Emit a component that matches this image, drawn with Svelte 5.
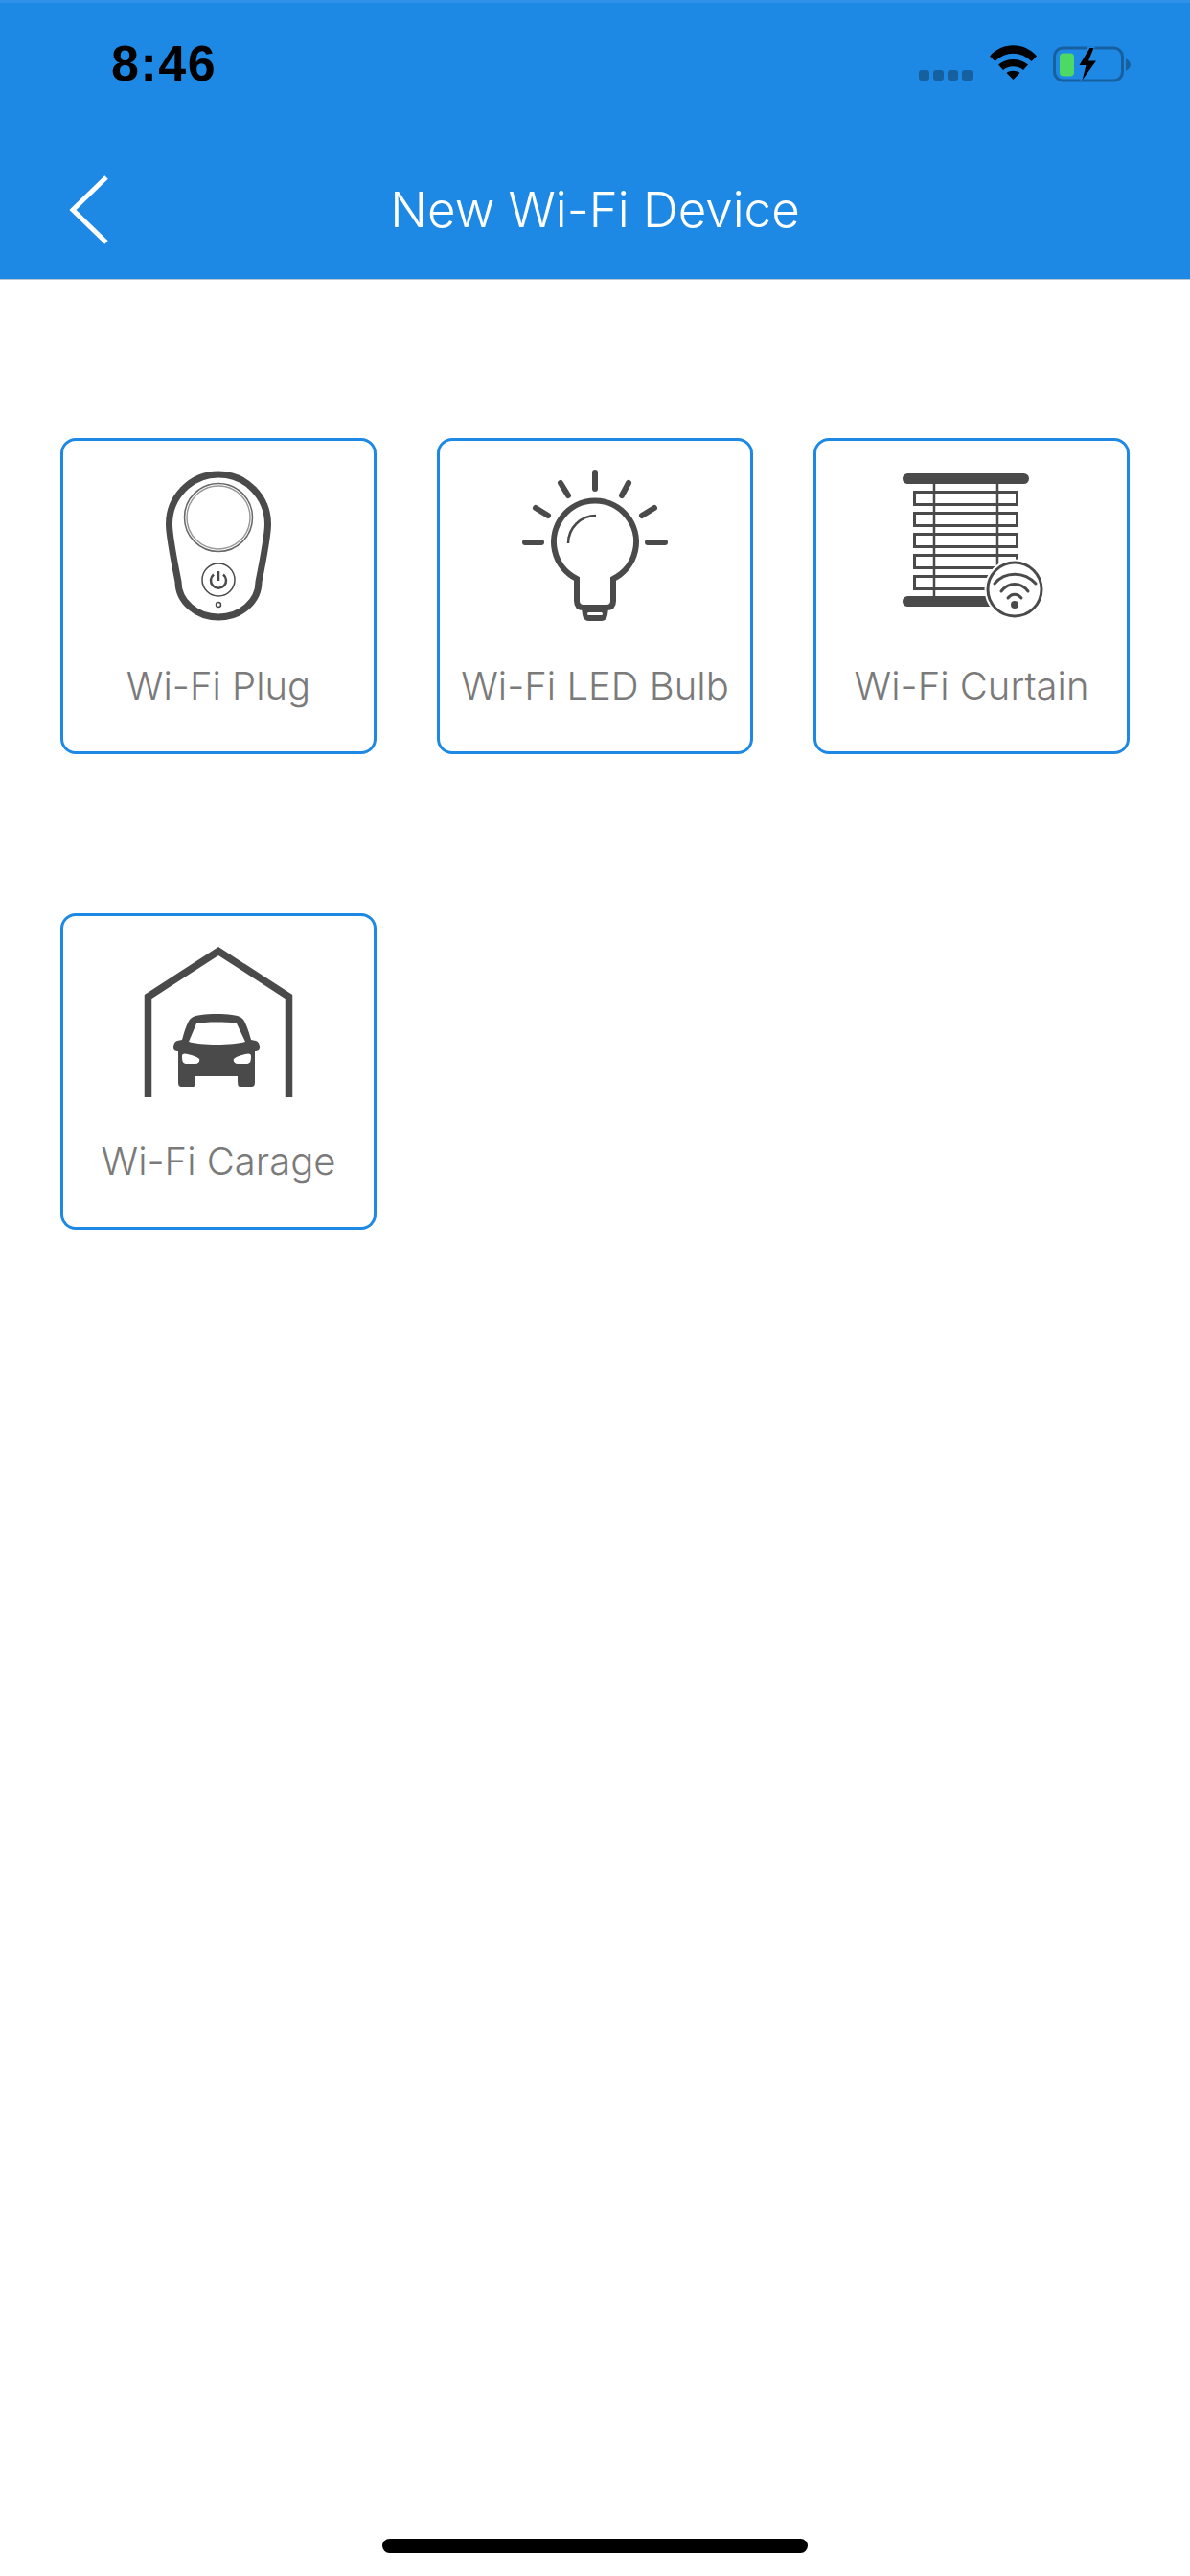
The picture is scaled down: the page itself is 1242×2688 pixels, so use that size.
<script>
  // device tiles shown on the picker; icon is drawn per kind below
  const devices = [
    { kind: "plug", label: "Wi-Fi Plug" },
    { kind: "bulb", label: "Wi-Fi LED Bulb" },
    { kind: "curtain", label: "Wi-Fi Curtain" },
    { kind: "garage", label: "Wi-Fi Carage" }
  ];
  const rays = [
    [165, 36, 165, 53],
    [129, 47, 137, 60],
    [200, 47, 193, 60],
    [103, 73, 116, 81],
    [227, 73, 214, 81],
    [92, 109, 109, 109],
    [220, 109, 238, 109]
  ];
  const slats = [55, 77, 99, 121, 143];
</script>

<div class="page">
  <header>
    <div class="status">
      <span class="time">8:46</span>
      <div class="signal">
        <i></i><i></i><i></i><i></i>
      </div>
      <svg class="wifi" width="50" height="37" viewBox="0 0 50 37">
        <path d="M0 11.500C13-3.500 36-3.500 49 11.500L43.500 17C32 6 17 6 5.500 17Z" />
        <path d="M9 20.500C17 13 32 13 40 20.500L35 26C29 21 20 21 14 26Z" />
        <path d="M17.500 29C21 26 28 26 31.500 29L24.500 36Z" />
      </svg>
      <svg class="battery" width="82" height="40" viewBox="0 0 82 40">
        <rect x="1.500" y="2" width="71" height="34" rx="9" fill="none" stroke="#17609f" stroke-width="3" />
        <path d="M76 13C79 15 81 17 81 19.500C81 22 79 24 76 26Z" fill="#17609f" />
        <rect x="7" y="7.500" width="15" height="24" rx="4" fill="#4cd964" />
        <path d="M36.500 0.500L26 21H33L28 37.500L47 14H38L44 0.500Z" fill="#1e88e5" />
        <path d="M38.500 2L27.500 20H34.500L30.500 35.500L45 15.500H37L42.500 2Z" fill="#000" />
      </svg>
    </div>
    <div class="nav">
      <button class="back" aria-label="Back">
        <svg width="42" height="74" viewBox="0 0 42 74">
          <path d="M39 3L4 37L39 71" fill="none" stroke="#fff" stroke-width="5" />
        </svg>
      </button>
      <h1>New Wi-Fi Device</h1>
    </div>
  </header>

  <main>
    {#each devices as d}
      <div class="tile">
        <svg class="icon" width="324" height="204" viewBox="3 3 324 204">
          {#if d.kind === "plug"}
            <path d="M113.500 90A51.500 52 0 0 1 216.500 90C216.500 100 209 140 207 150A42 37 0 0 1 123 150C121 140 113.500 100 113.500 90Z" fill="none" stroke="#4a4a4a" stroke-width="7" />
            <circle cx="165" cy="83" r="35.500" fill="none" stroke="#666" stroke-width="1.500" />
            <circle cx="165" cy="83" r="33" fill="none" stroke="#999" stroke-width="1.500" />
            <circle cx="165" cy="148" r="17" fill="none" stroke="#4a4a4a" stroke-width="1.500" />
            <path d="M160 142.500A8 8 0 1 0 170 142.500" fill="none" stroke="#4a4a4a" stroke-width="2.500" />
            <path d="M165 139V149" fill="none" stroke="#4a4a4a" stroke-width="2.500" />
            <circle cx="165" cy="174" r="2.500" fill="none" stroke="#4a4a4a" stroke-width="1.500" />
          {:else if d.kind === "bulb"}
            {#each rays as r}
              <line x1={r[0]} y1={r[1]} x2={r[2]} y2={r[3]} stroke="#4a4a4a" stroke-width="6" stroke-linecap="round" />
            {/each}
            <path d="M146 147A43 43 0 1 1 184 147V170Q184 177 177 177H153Q146 177 146 170Z" fill="none" stroke="#4a4a4a" stroke-width="6" />
            <path d="M137 110A29 29 0 0 1 166 81" fill="none" stroke="#4a4a4a" stroke-width="2.500" />
            <path d="M151 178H179L178 185Q177 191 171 191H159Q153 191 152 185Z" fill="#4a4a4a" />
            <rect x="157" y="182" width="16" height="3" rx="1.500" fill="#fff" />
          {:else if d.kind === "curtain"}
            <rect x="93" y="37" width="132" height="11" rx="5.500" fill="#4a4a4a" />
            {#each slats as y}
              <rect x="105.500" y={y + 1.5} width="107" height="13" fill="none" stroke="#4a4a4a" stroke-width="3" />
            {/each}
            <path d="M126 48V165M192 48V165" stroke="#4a4a4a" stroke-width="2.500" />
            <rect x="93" y="165" width="132" height="11" rx="5.500" fill="#4a4a4a" />
            <circle cx="210" cy="158" r="28" fill="#fff" stroke="#fff" stroke-width="7" />
            <circle cx="210" cy="158" r="28" fill="#fff" stroke="#4a4a4a" stroke-width="3" />
            <path d="M189 152C200 139 220 139 232 152M196 160C204 150 216 150 224 160M203 167C207 162 213 162 217 167" fill="none" stroke="#4a4a4a" stroke-width="3" stroke-linecap="round" />
            <circle cx="210" cy="174" r="4" fill="#4a4a4a" />
          {:else}
            <path d="M91.500 192V87L165 39.500L238.500 87V192" fill="none" stroke="#4a4a4a" stroke-width="7.500" />
            <path fill="#4a4a4a" fill-rule="evenodd" d="M163 105C175 105 185 106 189 109C192 111 194 116 197 125L199 132L204 133C207 134 208 137 208 140C208 143 206 144 203 144V176C203 180 202 181 199 181H188C185 181 185 179 185 170H141C141 179 141 181 138 181H127C124 181 123 180 123 176V144C120 144 118 143 118 140C118 137 119 134 122 133L127 132L129 125C132 116 134 111 137 109C141 106 151 105 163 105ZM142 115C150 113 176 113 184 115L193 134C180 138 146 138 134 134ZM127 149C127 146 130 146 133 147C138 148 143 150 145 152C146 154 144 157 141 157H132C128 157 127 155 127 149ZM199 149C199 146 196 146 193 147C188 148 183 150 181 152C180 154 182 157 185 157H194C198 157 199 155 199 149Z" />
          {/if}
        </svg>
        <span class="label">{d.label}</span>
      </div>
    {/each}
  </main>

  <div class="home"></div>
</div>

<style>
  :global(body) {
    margin: 0;
    background: #fff;
  }
  .page {
    width: 1242px;
    height: 2688px;
    display: flex;
    flex-direction: column;
    font-family: Inter, "Liberation Sans", sans-serif;
  }
  header {
    height: 292px;
    box-sizing: border-box;
    background: #1e88e5;
    border-top: 3px solid #2f91e8;
    border-bottom: 1px solid #b9c6d2;
  }
  .status {
    height: 100px;
    padding: 0 61px 0 116px;
    display: flex;
    align-items: flex-start;
  }
  .time {
    margin-top: 33px;
    font: 700 52px/60px "Liberation Sans", sans-serif;
    color: #000;
    letter-spacing: 1.500px;
  }
  .signal {
    margin: 70px 0 0 auto;
    display: flex;
    gap: 4px;
  }
  .signal i {
    width: 11px;
    height: 11px;
    border-radius: 3px;
    background: #17609f;
  }
  .wifi {
    margin: 44px 0 0 18px;
    fill: #000;
  }
  .battery {
    margin: 45px 0 0 16px;
  }
  .nav {
    display: grid;
    grid-template-columns: 1fr auto 1fr;
    align-items: center;
    margin-top: 79px;
    padding: 0 72px;
    height: 74px;
  }
  .back {
    padding: 0;
    border: 0;
    background: none;
    justify-self: start;
    display: flex;
  }
  h1 {
    margin: 0;
    font-size: 51px;
    font-weight: 300;
    line-height: 60px;
    color: #fff;
  }
  main {
    padding: 165px 63px 0;
    display: grid;
    grid-template-columns: repeat(3, 330px);
    column-gap: 63px;
    row-gap: 166px;
  }
  .tile {
    height: 330px;
    box-sizing: border-box;
    border: 3px solid #1e88e5;
    border-radius: 16px;
    display: flex;
    flex-direction: column;
    align-items: center;
  }
  .icon {
    display: block;
    flex: none;
  }
  .label {
    margin-top: 28px;
    font-size: 40px;
    font-weight: 300;
    line-height: 48px;
    color: #7a7a7a;
    white-space: nowrap;
  }
  .home {
    margin: auto 0 24px 399px;
    width: 444px;
    height: 15px;
    border-radius: 8px;
    background: #000;
  }
</style>
